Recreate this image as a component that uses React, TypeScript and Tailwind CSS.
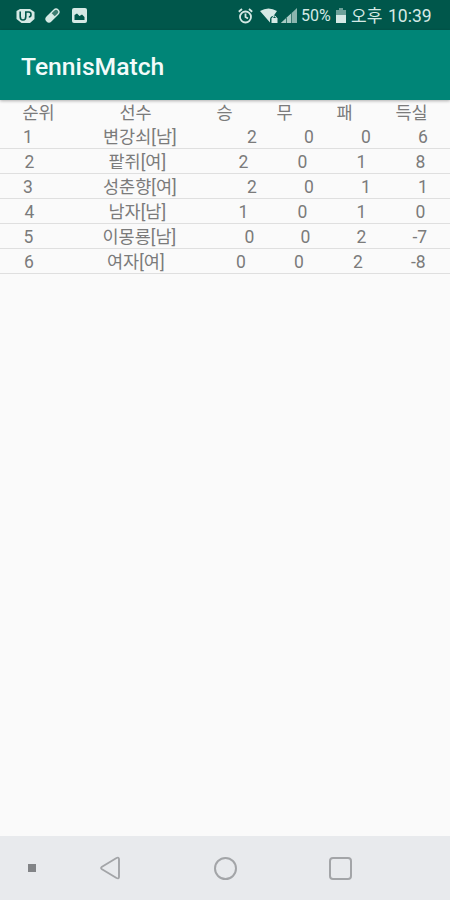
import React from 'react';

const columns = [
    { label: '순위', width: 'w-[97px]' },
    { label: '선수', width: 'w-[97px]' },
    { label: '승', width: 'w-[60px]' },
    { label: '무', width: 'w-[60px]' },
    { label: '패', width: 'w-[59px]' },
    { label: '득실', width: 'w-[40px]' },
];

// Columns are spaced per row, the name length shifts the numbers after it
const rows = [
    { grid: 'grid-cols-[80px_144px_57px_57px_57px_1fr] pl-[23px]', cells: ['1', '변강쇠[남]', '2', '0', '0', '6'] },
    { grid: 'grid-cols-[84px_130px_59px_59px_59px_1fr] pl-[24.500px]', cells: ['2', '팥쥐[여]', '2', '0', '1', '8'] },
    { grid: 'grid-cols-[80px_144px_57px_57px_57px_1fr] pl-[23px]', cells: ['3', '성춘향[여]', '2', '0', '1', '1'] },
    { grid: 'grid-cols-[84px_130px_59px_59px_59px_1fr] pl-[24.500px]', cells: ['4', '남자[남]', '1', '0', '1', '0'] },
    { grid: 'grid-cols-[79px_142px_56px_56px_56px_1fr] pl-[23.500px]', cells: ['5', '이몽룡[남]', '0', '0', '2', '-7'] },
    { grid: 'grid-cols-[83px_129px_58px_59px_58px_1fr] pl-[24px]', cells: ['6', '여자[여]', '0', '0', '2', '-8'] },
];

const StatusBar = () => (
    <div className="flex h-[30px] items-center bg-[#00574b] pl-4 pt-px text-[#d5e9e5]">
        <svg width="19" height="16" viewBox="0 0 19 16" fill="none">
            <path d="M4 1H14L18.500 4V11L14 15H5.500L.500 11V3Z" fill="currentColor" />
            <path d="M4.200 3.500V8.500Q4.200 12 7 12T9.800 8.500V4H12.800Q15 4 15 6.500T12.800 9" stroke="#00574b" strokeWidth="1.600" />
        </svg>
        <svg className="ml-[9px]" width="17" height="17" viewBox="0 0 17 17" fill="none">
            <g transform="rotate(-45 8.5 8.5)">
                <rect x="0" y="5" width="17" height="7" rx="3.500" fill="currentColor" />
                <path d="M9.500 6.300H13.500A2.200 2.200 0 0 1 13.500 10.700H9.500Z" fill="#3e7d73" />
            </g>
        </svg>
        <svg className="ml-[11px]" width="15" height="15" viewBox="0 0 15 15">
            <rect width="15" height="15" rx="2" fill="currentColor" />
            <path d="M2.500 12V7L5 5.500L7.500 8L10 6.500L12.500 9V12Z" fill="#00574b" />
        </svg>
        <svg className="ml-[151px]" width="15" height="16" viewBox="0 0 15 16" fill="none" stroke="currentColor" strokeWidth="1.800">
            <circle cx="7.500" cy="9" r="5.500" />
            <path d="M.800 3.800L4 1M14.200 3.800L11 1M7.500 5.500V9L10 10.500" />
        </svg>
        <svg className="ml-[7px]" width="18" height="16" viewBox="0 0 18 16">
            <path d="M0 3Q8.500-2 17 3L13.500 8Q10 8 10 12V14.500Z" fill="currentColor" />
            <rect x="11.500" y="10" width="6" height="5" fill="currentColor" />
            <path d="M12.800 10V9Q14.500 7 16.200 9V10" fill="none" stroke="currentColor" />
        </svg>
        <svg className="ml-[3px]" width="16" height="16" viewBox="0 0 16 16">
            <path d="M0 15L16 0V15Z" fill="#8bb5ae" />
            <path d="M0 15L11 4.700V15Z" fill="#a9cbc5" />
            <path d="M5.500 10V15M10.500 5V15" stroke="#397a70" />
        </svg>
        <span className="ml-[4px] w-[33px] pt-px text-[16px]">50%</span>
        <svg className="ml-[2px]" width="10" height="15" viewBox="0 0 10 15">
            <path d="M3 0H7V2H10V8H0V2H3Z" fill="#6da199" />
            <path d="M0 7H10V15H0Z" fill="currentColor" />
        </svg>
        <span className="ml-[5px] w-[37px] pt-[2px] text-[17px]">오후</span>
        <span className="pt-px text-[17.500px]">10:39</span>
    </div>
);

const NavigationBar = () => (
    <div className="flex h-16 items-center bg-[#e8eaed] text-[#a3a5a8]">
        <div className="ml-[28px] size-2 bg-[#828487]" />
        <svg className="ml-[64px]" width="21" height="24" viewBox="0 0 21 24" fill="none" stroke="currentColor" strokeWidth="1.900">
            <path d="M2 10.800L16.500 2Q19 .800 19 3.300V20.700Q19 23.200 16.500 22L2 13.200Q.200 12 2 10.800Z" />
        </svg>
        <div className="ml-[93px] size-[23px] rounded-full border-2 border-current" />
        <div className="ml-[92px] size-[23px] rounded-[4px] border-2 border-current" />
    </div>
);

const App = () => {
    return (
        <div className="flex h-[900px] w-[450px] flex-col overflow-hidden bg-[#fafafa] font-[Roboto,'Noto_Sans_CJK_KR',sans-serif]">
            <StatusBar />
            <header className="flex h-[70px] items-center bg-[#008577] pl-[21px] pt-[3px] shadow-[0_1px_3px_rgba(0,0,0,0.300)]">
                <h1 className="text-[24.700px] font-medium text-[#f3fbfa]">TennisMatch</h1>
            </header>

            <main className="flex-1 text-[17.500px] leading-[26px] text-[#7b7b7b]">
                <div className="flex h-6 pl-[22.500px]">
                    {columns.map((column) => (
                        <span key={column.label} className={column.width}>{column.label}</span>
                    ))}
                </div>
                {rows.map((row) => (
                    <div key={row.cells[0]} className={`grid h-[25px] whitespace-nowrap border-b border-[#dfdfdf] ${row.grid}`}>
                        {row.cells.map((cell, i) => (
                            <span key={i}>{cell}</span>
                        ))}
                    </div>
                ))}
            </main>

            <NavigationBar />
        </div>
    );
};

export default App;
